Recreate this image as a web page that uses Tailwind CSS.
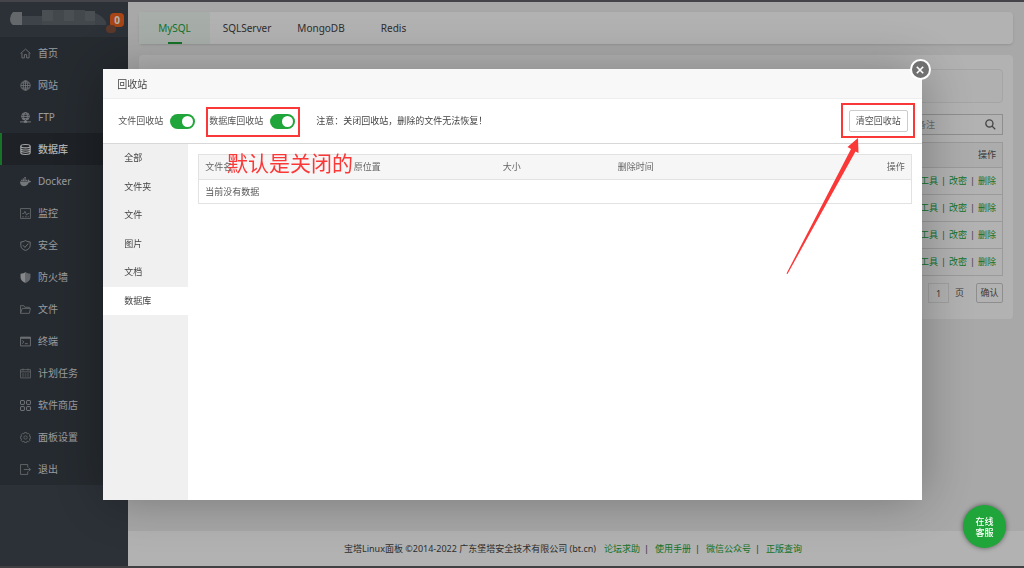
<!DOCTYPE html>
<html lang="zh-CN">
<head>
<meta charset="utf-8">
<meta name="viewport" content="width=device-width, initial-scale=1">
<title>宝塔Linux面板</title>
<script src="https://cdn.jsdelivr.net/npm/@tailwindcss/browser@4"></script>
</head>
<body class="h-screen overflow-hidden bg-[#f1f1f1] font-['Noto_Sans','Noto_Sans_CJK_SC',sans-serif] text-[9px] leading-[14px] text-[#555]">
<div class="flex h-full flex-col border-t-2 border-b-2 border-t-[#64626c] border-b-[#5c5c60]">
 <div class="flex min-h-0 flex-1">
  <!-- Sidebar -->
  <aside class="w-32 shrink-0 bg-[#3f4650]">
   <div class="flex h-[35px] items-center justify-between pr-1 pl-2.5">
    <svg class="h-5 w-24" viewBox="0 0 96 20" aria-hidden="true">
     <path fill="#90959a" d="M3 2h9v13H3q-3-2-3-6t3-7z"/><path fill="#59616a" d="M12 6h20v9H12z"/>
     <path fill="#6b7178" d="M32 0h11v11H32zM54 0h10v11H54zM75 1h10v10H75z"/><path fill="#61676e" d="M43 0h11v11H43zM64 0h11v11H64zM32 11h53v4H32z"/>
     <path fill="#59606a" d="M85 3q8 3 11 9v3H85z"/>
    </svg>
    <span class="relative flex h-3.5 w-3.5 items-center justify-center rounded bg-[#f0641e] text-[10px] font-bold text-white"><span class="absolute top-3 -left-1 h-2 w-2.5 rounded-full bg-[#84503c]"></span>0</span>
   </div>
   <nav class="bg-[#363d45] text-[10px] text-[#dcdee0]">
    <a href="#" class="flex h-8 items-center gap-[7px] border-l-2 border-transparent pl-[18px]"><svg class="h-[11px] w-[11px] text-[#a0a4a9]" viewBox="0 0 20 20" fill="none" stroke="currentColor" stroke-width="1.6"><path d="M1 10 10 2l9 8M3.500 9v9H8v-6h4v6h4.500V9"/></svg>首页</a>
    <a href="#" class="flex h-8 items-center gap-[7px] border-l-2 border-transparent pl-[18px]"><svg class="h-[11px] w-[11px] text-[#a0a4a9]" viewBox="0 0 20 20" fill="none" stroke="currentColor" stroke-width="1.6"><circle cx="10" cy="10" r="8.500"/><ellipse cx="10" cy="10" rx="4" ry="8.500"/><path d="M1.500 10h17M10 1.500v17M3 5.500h14M3 14.500h14"/></svg>网站</a>
    <a href="#" class="flex h-8 items-center gap-[7px] border-l-2 border-transparent pl-[18px]"><svg class="h-[11px] w-[11px] text-[#b0b4b9]" viewBox="0 0 20 20" fill="none" stroke="currentColor" stroke-width="1.600"><circle cx="10" cy="8" r="7"/><ellipse cx="10" cy="8" rx="3.500" ry="7"/><path d="M3 8h14M4.500 4h11M4.500 12h11M10 15v3M0 18h20"/><path d="M7 18h6" stroke-width="3"/></svg>FTP</a>
    <a href="#" class="flex h-8 items-center gap-[7px] border-l-2 border-[#20a53a] bg-[#2b3036] pl-[18px] font-medium text-white"><svg class="h-[11px] w-[11px] text-[#eeeff0]" viewBox="0 0 20 20" fill="none" stroke="currentColor" stroke-width="2"><ellipse cx="10" cy="4" rx="8.500" ry="3"/><path d="M1.500 4v12c0 4 17 4 17 0V4M1.500 8c0 4 17 4 17 0M1.500 12c0 4 17 4 17 0"/></svg>数据库</a>
    <a href="#" class="flex h-8 items-center gap-[7px] border-l-2 border-transparent pl-[18px]"><svg class="h-[11px] w-[11px] text-[#a8acb1]" viewBox="0 0 20 20" fill="currentColor"><path d="M0 10h14c1-1 .5-3 1.500-4 1.500 1 1.500 2 1.500 3 1 0 2 0 3 .5-.5 2-2 2.500-4 2.500-2 5-5 6.500-9 6.500-5 0-7-4-7-8.500zM2 7h2.500v2H2zM5 7h2.500v2H5zM8 7h2.500v2H8zM11 7h2.500v2H11zM5 4.500h2.500v2H5zM8 4.500h2.500v2H8zM8 2h2.500v2H8z"/></svg>Docker</a>
    <a href="#" class="flex h-8 items-center gap-[7px] border-l-2 border-transparent pl-[18px]"><svg class="h-[11px] w-[11px] text-[#92979c]" viewBox="0 0 20 20" fill="none" stroke="currentColor" stroke-width="1.600"><path d="M1 1h18v18H1zM4 10h3l2-4 3 7 2-3h3M4 16h3M9 16h3M14 16h2"/></svg>监控</a>
    <a href="#" class="flex h-8 items-center gap-[7px] border-l-2 border-transparent pl-[18px]"><svg class="h-[11px] w-[11px] text-[#a8acb1]" viewBox="0 0 20 20" fill="none" stroke="currentColor" stroke-width="1.600"><path d="M10 1c3 2 6 2.500 8.500 2.500V10c0 5-4 7.500-8.500 9-4.500-1.500-8.500-4-8.500-9V3.500C4 3.500 7 3 10 1zM5.500 9.500l3.500 4 6-7"/></svg>安全</a>
    <a href="#" class="flex h-8 items-center gap-[7px] border-l-2 border-transparent pl-[18px]"><svg class="h-[11px] w-[11px] text-[#c0c3c7]" viewBox="0 0 20 20" fill="currentColor"><path d="M10 0v20C5 18 1 15 1 10V3C5 3 7.500 2 10 0z"/><path opacity=".65" d="M10 0v20c5-2 9-5 9-10V3C15 3 12.500 2 10 0z"/></svg>防火墙</a>
    <a href="#" class="flex h-8 items-center gap-[7px] border-l-2 border-transparent pl-[18px]"><svg class="h-[11px] w-[11px] text-[#92979c]" viewBox="0 0 20 20" fill="none" stroke="currentColor" stroke-width="1.600"><path d="M1 17V3h6l2 3h8v2M1 17 4 8h15l-2 9z"/></svg>文件</a>
    <a href="#" class="flex h-8 items-center gap-[7px] border-l-2 border-transparent pl-[18px]"><svg class="h-[11px] w-[11px] text-[#a0a4a9]" viewBox="0 0 20 20" fill="none" stroke="currentColor" stroke-width="1.600"><path d="M1 2h18v16H1zM4 8l3 3-3 3M9 14h5"/><path d="M1 3.500h18" stroke-width="3"/></svg>终端</a>
    <a href="#" class="flex h-8 items-center gap-[7px] border-l-2 border-transparent pl-[18px]"><svg class="h-[11px] w-[11px] text-[#8a8f94]" viewBox="0 0 20 20" fill="none" stroke="currentColor" stroke-width="1.600"><path d="M1 3h18v15H1zM1 7h18M5.500 1v4M14.500 1v4M4 11h3M8.500 11h3M13 11h3M4 14.500h3M8.500 14.500h3M13 14.500h3"/></svg>计划任务</a>
    <a href="#" class="flex h-8 items-center gap-[7px] border-l-2 border-transparent pl-[18px]"><svg class="h-[11px] w-[11px] text-[#a8acb1]" viewBox="0 0 20 20" fill="none" stroke="currentColor" stroke-width="1.800"><rect x="1" y="1" width="7" height="7" rx="1"/><rect x="12" y="1" width="7" height="7" rx="1"/><rect x="1" y="12" width="7" height="7" rx="1"/><rect x="12" y="12" width="7" height="7" rx="1"/></svg>软件商店</a>
    <a href="#" class="flex h-8 items-center gap-[7px] border-l-2 border-transparent pl-[18px]"><svg class="h-[11px] w-[11px] text-[#8a8f94]" viewBox="0 0 20 20" fill="none" stroke="currentColor" stroke-width="1.600"><path d="M8 1h4l.7 2.500 2.800-1 2.500 2.500-1 2.800L19 8v4l-2 .5 1 2.700-2.500 2.500-2.800-1L12 19H8l-.7-2.300-2.800 1L2 15.200l1-2.700L1 12V8l2-.2L2 5l2.500-2.500 2.800 1z"/><circle cx="10" cy="10" r="3"/></svg>面板设置</a>
    <a href="#" class="flex h-8 items-center gap-[7px] border-l-2 border-transparent pl-[18px]"><svg class="h-[11px] w-[11px] text-[#92979c]" viewBox="0 0 20 20" fill="none" stroke="currentColor" stroke-width="1.600"><path d="M14 6V1H1v18h13v-5M7 10h12M15.500 6.500 19 10l-3.500 3.500"/></svg>退出</a>
   </nav>
  </aside>

  <!-- Page content -->
  <div class="flex min-w-0 flex-1 flex-col">
   <main class="flex flex-1 flex-col gap-[11px] pt-2.5 pr-[11px] pl-[11px]">
    <nav class="flex h-8 rounded-sm bg-white text-[10px] text-[#444] shadow-sm">
     <a href="#" class="relative flex w-[71px] items-center justify-center bg-[#f0f9f2] text-[#20a53a]">MySQL<span class="absolute bottom-0 h-0.5 w-3.5 bg-[#20a53a]"></span></a>
     <a href="#" class="flex w-[74px] items-center justify-center">SQLServer</a>
     <a href="#" class="flex w-[74px] items-center justify-center">MongoDB</a>
     <a href="#" class="flex w-[71px] items-center justify-center">Redis</a>
    </nav>
    <section class="rounded bg-white px-2.5 pt-3.5 pb-4">
     <div class="h-[34px] rounded-sm border border-[#ececec] bg-[#fcfcfc]"></div>
     <div class="mt-[11px] flex justify-end">
      <label class="flex h-[21px] w-36 items-center border border-[#ccc] pr-1.5 pl-[57px]">
       <input type="text" aria-label="备注" placeholder="备注" class="min-w-0 flex-1 outline-none placeholder:text-[#999]">
       <svg class="h-[11px] w-[11px] text-[#666]" viewBox="0 0 20 20" fill="none" stroke="currentColor" stroke-width="2.5"><circle cx="8" cy="8" r="6.500"/><path d="m12.500 12.500 6 6"/></svg>
      </label>
     </div>
     <table class="mt-[7px] w-full border border-[#ddd] text-right">
      <thead class="bg-[#f6f6f6]"><tr class="h-[25px] border-b border-[#ddd]"><th class="pr-1.5 font-normal">操作</th></tr></thead>
      <tbody>
       <tr class="h-[27px] border-b border-[#ddd]"><td class="pr-1.5"><a href="#" class="text-[#20a53a]">工具</a><span class="px-[3px]">|</span><a href="#" class="text-[#20a53a]">改密</a><span class="px-[3px]">|</span><a href="#" class="text-[#20a53a]">删除</a></td></tr>
       <tr class="h-[27px] border-b border-[#ddd]"><td class="pr-1.5"><a href="#" class="text-[#20a53a]">工具</a><span class="px-[3px]">|</span><a href="#" class="text-[#20a53a]">改密</a><span class="px-[3px]">|</span><a href="#" class="text-[#20a53a]">删除</a></td></tr>
       <tr class="h-[27px] border-b border-[#ddd]"><td class="pr-1.5"><a href="#" class="text-[#20a53a]">工具</a><span class="px-[3px]">|</span><a href="#" class="text-[#20a53a]">改密</a><span class="px-[3px]">|</span><a href="#" class="text-[#20a53a]">删除</a></td></tr>
       <tr class="h-[27px]"><td class="pr-1.5"><a href="#" class="text-[#20a53a]">工具</a><span class="px-[3px]">|</span><a href="#" class="text-[#20a53a]">改密</a><span class="px-[3px]">|</span><a href="#" class="text-[#20a53a]">删除</a></td></tr>
      </tbody>
     </table>
     <div class="mt-[7px] flex h-5 items-center justify-end">
      <input type="text" value="1" aria-label="页" class="h-full w-[21px] border border-[#e6e6e6] text-center"><span class="mr-3 ml-1.5">页</span>
      <button type="button" class="h-full w-[27px] rounded-xs border border-[#ccc]">确认</button>
     </div>
    </section>
   </main>
   <footer class="flex h-[35px] items-center justify-center bg-white pr-1.5 text-[#444]">
    <span class="mr-2">宝塔Linux面板 ©2014-2022 广东堡塔安全技术有限公司 (bt.cn)</span>
    <a href="#" class="text-[#20a53a]">论坛求助</a><span class="mr-1.5 ml-1">|</span>
    <a href="#" class="text-[#20a53a]">使用手册</a><span class="mr-1.5 ml-1">|</span>
    <a href="#" class="text-[#20a53a]">微信公众号</a><span class="mr-1.5 ml-1">|</span>
    <a href="#" class="text-[#20a53a]">正版查询</a>
   </footer>
  </div>
 </div>
</div>

<!-- Recycle bin dialog -->
<div class="fixed inset-0 flex items-center justify-center bg-black/30 pt-px pl-px">
 <div role="dialog" aria-labelledby="dlg" class="relative flex h-[76%] w-4/5 flex-col bg-white shadow-[1px_1px_50px_rgba(0,0,0,0.3)]">
  <h2 id="dlg" class="flex h-[30px] shrink-0 items-center border-b border-[#eee] bg-[#f8f8f8] pl-3.5 text-[10px] text-[#444]">回收站</h2>
  <button type="button" aria-label="关闭" class="absolute -top-2.5 -right-[9px] flex h-[21px] w-[21px] items-center justify-center rounded-full border-2 border-white bg-[#707070]"><svg class="h-2 w-2" viewBox="0 0 10 10" stroke="#fff" stroke-width="2"><path d="m1 1 8 8M9 1 1 9"/></svg></button>
  <div class="flex h-[45px] shrink-0 items-center border-b border-[#d8d8d8] pr-3.5 pl-[15px]">
   <label class="flex w-[91px] items-center gap-[7px]">文件回收站<input type="checkbox" checked class="h-[15px] w-[25px] appearance-none rounded-full bg-[#20a53a] before:mt-0.5 before:ml-3 before:block before:h-[11px] before:w-[11px] before:rounded-full before:bg-white"></label>
   <label class="flex w-[107px] items-center gap-[7px]">数据库回收站<input type="checkbox" checked class="h-[15px] w-[25px] appearance-none rounded-full bg-[#20a53a] before:mt-0.5 before:ml-3 before:block before:h-[11px] before:w-[11px] before:rounded-full before:bg-white"></label>
   <p class="flex-1 text-[#444]">注意：关闭回收站，删除的文件无法恢复！</p>
   <button type="button" class="h-[22px] w-[59px] rounded-xs border border-[#ccc]">清空回收站</button>
  </div>
  <div class="flex min-h-0 flex-1">
   <div class="w-[85px] shrink-0 bg-[#f0f0f0] text-[#444]">
    <div class="grid h-[171px] grid-rows-6">
     <button type="button" class="pl-[21px] text-left">全部</button>
     <button type="button" class="pl-[21px] text-left">文件夹</button>
     <button type="button" class="pl-[21px] text-left">文件</button>
     <button type="button" class="pl-[21px] text-left">图片</button>
     <button type="button" class="pl-[21px] text-left">文档</button>
     <button type="button" class="bg-white pl-[21px] text-left">数据库</button>
    </div>
   </div>
   <div class="flex-1 pt-2.5 pr-2.5 pl-2.5">
    <table class="w-full table-fixed border border-[#e2e2e2] text-left">
     <thead class="bg-[#f6f6f6] text-[#666]"><tr class="h-[25px] border-b border-[#e2e2e2]">
      <th class="w-[149px] pl-1.5 font-normal">文件名</th><th class="w-[149px] pl-1.5 font-normal">原位置</th><th class="w-[115px] pl-1.5 font-normal">大小</th><th class="pl-1.5 font-normal">删除时间</th><th class="w-16 pr-1.5 text-right font-normal">操作</th></tr></thead>
     <tbody><tr class="h-6"><td colspan="5" class="pl-1.5">当前没有数据</td></tr></tbody>
    </table>
   </div>
  </div>
 </div>
</div>

<button type="button" class="fixed right-[18px] bottom-5 h-[43px] w-[43px] rounded-full bg-[#20a53a] text-[9px] leading-[11px] font-medium text-white shadow-[0_0_5px_rgba(0,0,0,0.5)]">在线<br>客服</button>

<!-- Annotations drawn over the dialog -->
<svg class="pointer-events-none absolute inset-0 h-full w-full" viewBox="0 0 1024 568" fill="none" stroke="#fb3838" stroke-width="2" aria-hidden="true">
 <rect x="207" y="108" width="92" height="28"/>
 <rect x="842" y="104" width="72" height="33"/>
 <path fill="#fb3838" stroke="none" d="M858 138 847.500 147 851 149 786.500 273.500 787.500 274 855.500 151.500 858.500 153z"/>
</svg>
<p class="absolute top-[149px] left-[227px] text-[21px] leading-[28px] text-[#fb3838]">默认是关闭的</p>
</body>
</html>
